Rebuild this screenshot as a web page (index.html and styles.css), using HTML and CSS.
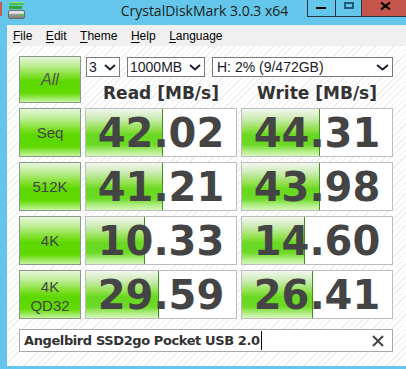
FILE: index.html
```html
<!DOCTYPE html>
<html>
<head>
<meta charset="utf-8">
<title>CrystalDiskMark</title>
<link rel="stylesheet" href="styles.css">
</head>
<body>
<div class="win">
  <div class="titlebar">
    <div class="tb-left">
      <span class="redbit"></span>
      <svg class="appicon" width="18" height="18" viewBox="0 0 18 18">
        <defs>
          <linearGradient id="drv" x1="0" y1="0" x2="0" y2="1">
            <stop offset="0" stop-color="#f2f2f2"/>
            <stop offset="0.45" stop-color="#d0d0d0"/>
            <stop offset="0.5" stop-color="#9a9a9a"/>
            <stop offset="1" stop-color="#7c7c7c"/>
          </linearGradient>
        </defs>
        <rect x="1" y="1" width="15" height="3" rx="0.8" fill="#49c24a"/>
        <rect x="1" y="1" width="15" height="1" fill="#8ee08e"/>
        <rect x="1" y="5" width="13" height="3" rx="0.8" fill="#2fa830"/>
        <rect x="0.5" y="9.5" width="16" height="8" rx="1.5" fill="url(#drv)" stroke="#6a6a6a"/>
        <rect x="12" y="13" width="3" height="2" fill="#3fd13f"/>
      </svg>
    </div>
    <div class="title">CrystalDiskMark 3.0.3 x64</div>
    <div class="controls">
      <div class="ctl min"><span class="g-min"></span></div>
      <div class="ctl max"><span class="g-max"></span></div>
      <div class="ctl close">
        <svg width="11" height="8" viewBox="0 0 11 8"><path d="M1 0.5 L10 7.5 M10 0.5 L1 7.5" stroke="#000" stroke-width="2.2" fill="none"/></svg>
      </div>
    </div>
  </div>
  <div class="frame">
    <div class="client">
      <nav class="menubar">
        <span class="mi"><u>F</u>ile</span>
        <span class="mi"><u>E</u>dit</span>
        <span class="mi"><u>T</u>heme</span>
        <span class="mi"><u>H</u>elp</span>
        <span class="mi"><u>L</u>anguage</span>
      </nav>
      <main class="bench">
        <div class="lbl all">All</div>
        <div class="top">
          <div class="selects">
            <div class="sel s1"><span>3</span><svg class="chev" width="12" height="7" viewBox="0 0 12 7"><path d="M1 1 L6 5.5 L11 1" stroke="#1a1a2a" stroke-width="1.8" fill="none"/></svg></div>
            <div class="sel s2"><span>1000MB</span><svg class="chev" width="12" height="7" viewBox="0 0 12 7"><path d="M1 1 L6 5.5 L11 1" stroke="#1a1a2a" stroke-width="1.8" fill="none"/></svg></div>
            <div class="sel s3"><span>H: 2% (9/472GB)</span><svg class="chev" width="13" height="7" viewBox="0 0 13 7"><path d="M1 1 L6.5 5.5 L12 1" stroke="#1a1a2a" stroke-width="1.8" fill="none"/></svg></div>
          </div>
          <div class="heads">
            <div class="head">Read [MB/s]</div>
            <div class="head">Write [MB/s]</div>
          </div>
        </div>

        <div class="lbl">Seq</div>
        <div class="val" style="--fill:77px">42.02</div>
        <div class="val" style="--fill:78px">44.31</div>

        <div class="lbl">512K</div>
        <div class="val" style="--fill:77px">41.21</div>
        <div class="val" style="--fill:78px">43.98</div>

        <div class="lbl">4K</div>
        <div class="val" style="--fill:59px">10.33</div>
        <div class="val" style="--fill:63px">14.60</div>

        <div class="lbl two">4K<br>QD32</div>
        <div class="val" style="--fill:73px">29.59</div>
        <div class="val" style="--fill:71px">26.41</div>

        <div class="comment">
          <span class="ctext">Angelbird SSD2go Pocket USB 2.0</span><span class="caret"></span>
          <svg class="clear" width="12" height="12" viewBox="0 0 12 12"><path d="M1 1 L11 11 M11 1 L1 11" stroke="#444" stroke-width="2" fill="none"/></svg>
        </div>
      </main>
    </div>
  </div>
</div>
</body>
</html>
```

FILE: styles.css
```css
* { box-sizing: border-box; }
html, body { margin: 0; padding: 0; }
body { width: 406px; height: 369px; overflow: hidden; background: #63c6ea; }

.win { width: 406px; height: 369px; background: #63c6ea; display: flex; flex-direction: column; }

.titlebar {
  height: 25px;
  display: grid;
  grid-template-columns: 1fr;
  align-items: start;
}
.titlebar > * { grid-area: 1 / 1; }
.tb-left { display: flex; align-items: flex-start; justify-self: start; }
.redbit { width: 2px; height: 14px; margin-top: 2px; background: #c35d52; }
.appicon { display: block; margin: 1px 0 0 6px; }
.title {
  justify-self: center;
  font-family: "Open Sans", "Noto Sans", sans-serif;
  font-size: 14px;
  line-height: 20px;
  padding: 1px 0 0 3px;
  color: #1c1c1c;
}
.controls { justify-self: end; display: flex; height: 17px; }
.ctl { height: 17px; border-left: 1px solid #27363f; border-bottom: 1px solid #27363f; }
.min { width: 28px; padding: 7px 0 0 8px; }
.max { width: 26px; padding: 2px 0 0 8px; }
.close { width: 45px; background: #c6554b; padding: 2px 0 0 18px; }
.close svg { display: block; }
.g-min { display: block; width: 10px; height: 2px; background: #000; }
.g-max { display: block; width: 10px; height: 7px; border: 2px solid #1f5c78; }

.frame { flex: 1; padding: 0 0 3px 7px; display: flex; }
.client { flex: 1; display: flex; flex-direction: column; background: #fff; }

.menubar {
  height: 21px;
  background: #f0f0f0;
  display: flex;
  align-items: center;
  gap: 13.5px;
  padding: 0 0 0 6px;
  font-family: "Liberation Sans", Arial, sans-serif;
  font-size: 12px;
  color: #000;
}
.mi u { text-decoration: underline; text-underline-offset: 2px; }

.bench {
  flex: 1;
  display: grid;
  grid-template-columns: 62px 152px 152px;
  grid-template-rows: 47px repeat(4, 49px) 28px;
  column-gap: 4px;
  row-gap: 5px;
  align-content: start;
  padding: 10px 0 0 12px;
  background: repeating-linear-gradient(135deg, #ffffff 0 3.5px, #eeeeee 3.5px 4.5px);
}

.lbl {
  border: 1px solid #8a9a88;
  background: linear-gradient(to bottom, #e6f6da 0%, #b8ec8c 22%, #7fe02a 42%, #5cd800 55%, #60da00 80%, #9cea60 92%, #c6f59e 100%);
  display: flex;
  align-items: center;
  justify-content: center;
  text-align: center;
  font-family: "Liberation Sans", Arial, sans-serif;
  font-size: 15px;
  color: #454545;
}
.lbl.all { font-style: italic; font-size: 16px; color: #555; padding-top: 1px; }
.lbl.two { line-height: 19px; padding-top: 3px; }

.top { grid-column: 2 / 4; display: flex; flex-direction: column; }
.selects { display: flex; gap: 7px; margin: 1px 0 0 1px; height: 20px; }
.sel {
  height: 20px;
  border: 1px solid #7a7a7a;
  background: #fff;
  display: flex;
  align-items: center;
  justify-content: space-between;
  padding: 0 3px 0 2px;
  font-family: "Liberation Sans", Arial, sans-serif;
  font-size: 14px;
  color: #1a1a2a;
}
.sel span { line-height: 18px; }
.chev { display: block; }
.s1 { width: 34px; }
.s2 { width: 78px; }
.s3 { width: 181px; padding-left: 4px; }

.heads { display: grid; grid-template-columns: 152px 152px; column-gap: 4px; margin-top: 6px; }
.head {
  text-align: center;
  font-family: "DejaVu Sans", Verdana, sans-serif;
  font-weight: bold;
  font-size: 17px;
  line-height: 20px;
  color: #333;
}

.val {
  border: 1px solid #bdbdbd;
  background-color: #fff;
  background-image:
    linear-gradient(#3f8f22, #3f8f22),
    linear-gradient(to bottom, #f2f7ee 0%, #cdecb6 20%, #90e04a 44%, #68d820 55%, #6cda26 76%, #b2ee86 90%, #d4f7ba 100%);
  background-repeat: no-repeat;
  background-size: 1px 100%, var(--fill) 100%;
  background-position: calc(var(--fill) - 1px) 0, 0 0;
  display: flex;
  align-items: center;
  justify-content: center;
  font-family: "DejaVu Sans", Verdana, sans-serif;
  font-weight: bold;
  font-size: 40px;
  line-height: 40px;
  color: #444;
}

.comment {
  grid-column: 1 / -1;
  margin-top: 5px;
  border: 1px solid #a8a8a8;
  background: #fff;
  display: flex;
  align-items: center;
  padding: 0 8px 0 4px;
  font-family: "DejaVu Sans", Verdana, sans-serif;
  font-weight: bold;
  font-size: 13px;
  letter-spacing: -0.4px;
  color: #333;
}
.caret { width: 1px; height: 19px; background: #000; margin-left: 1px; }
.clear { margin-left: auto; display: block; }
```
